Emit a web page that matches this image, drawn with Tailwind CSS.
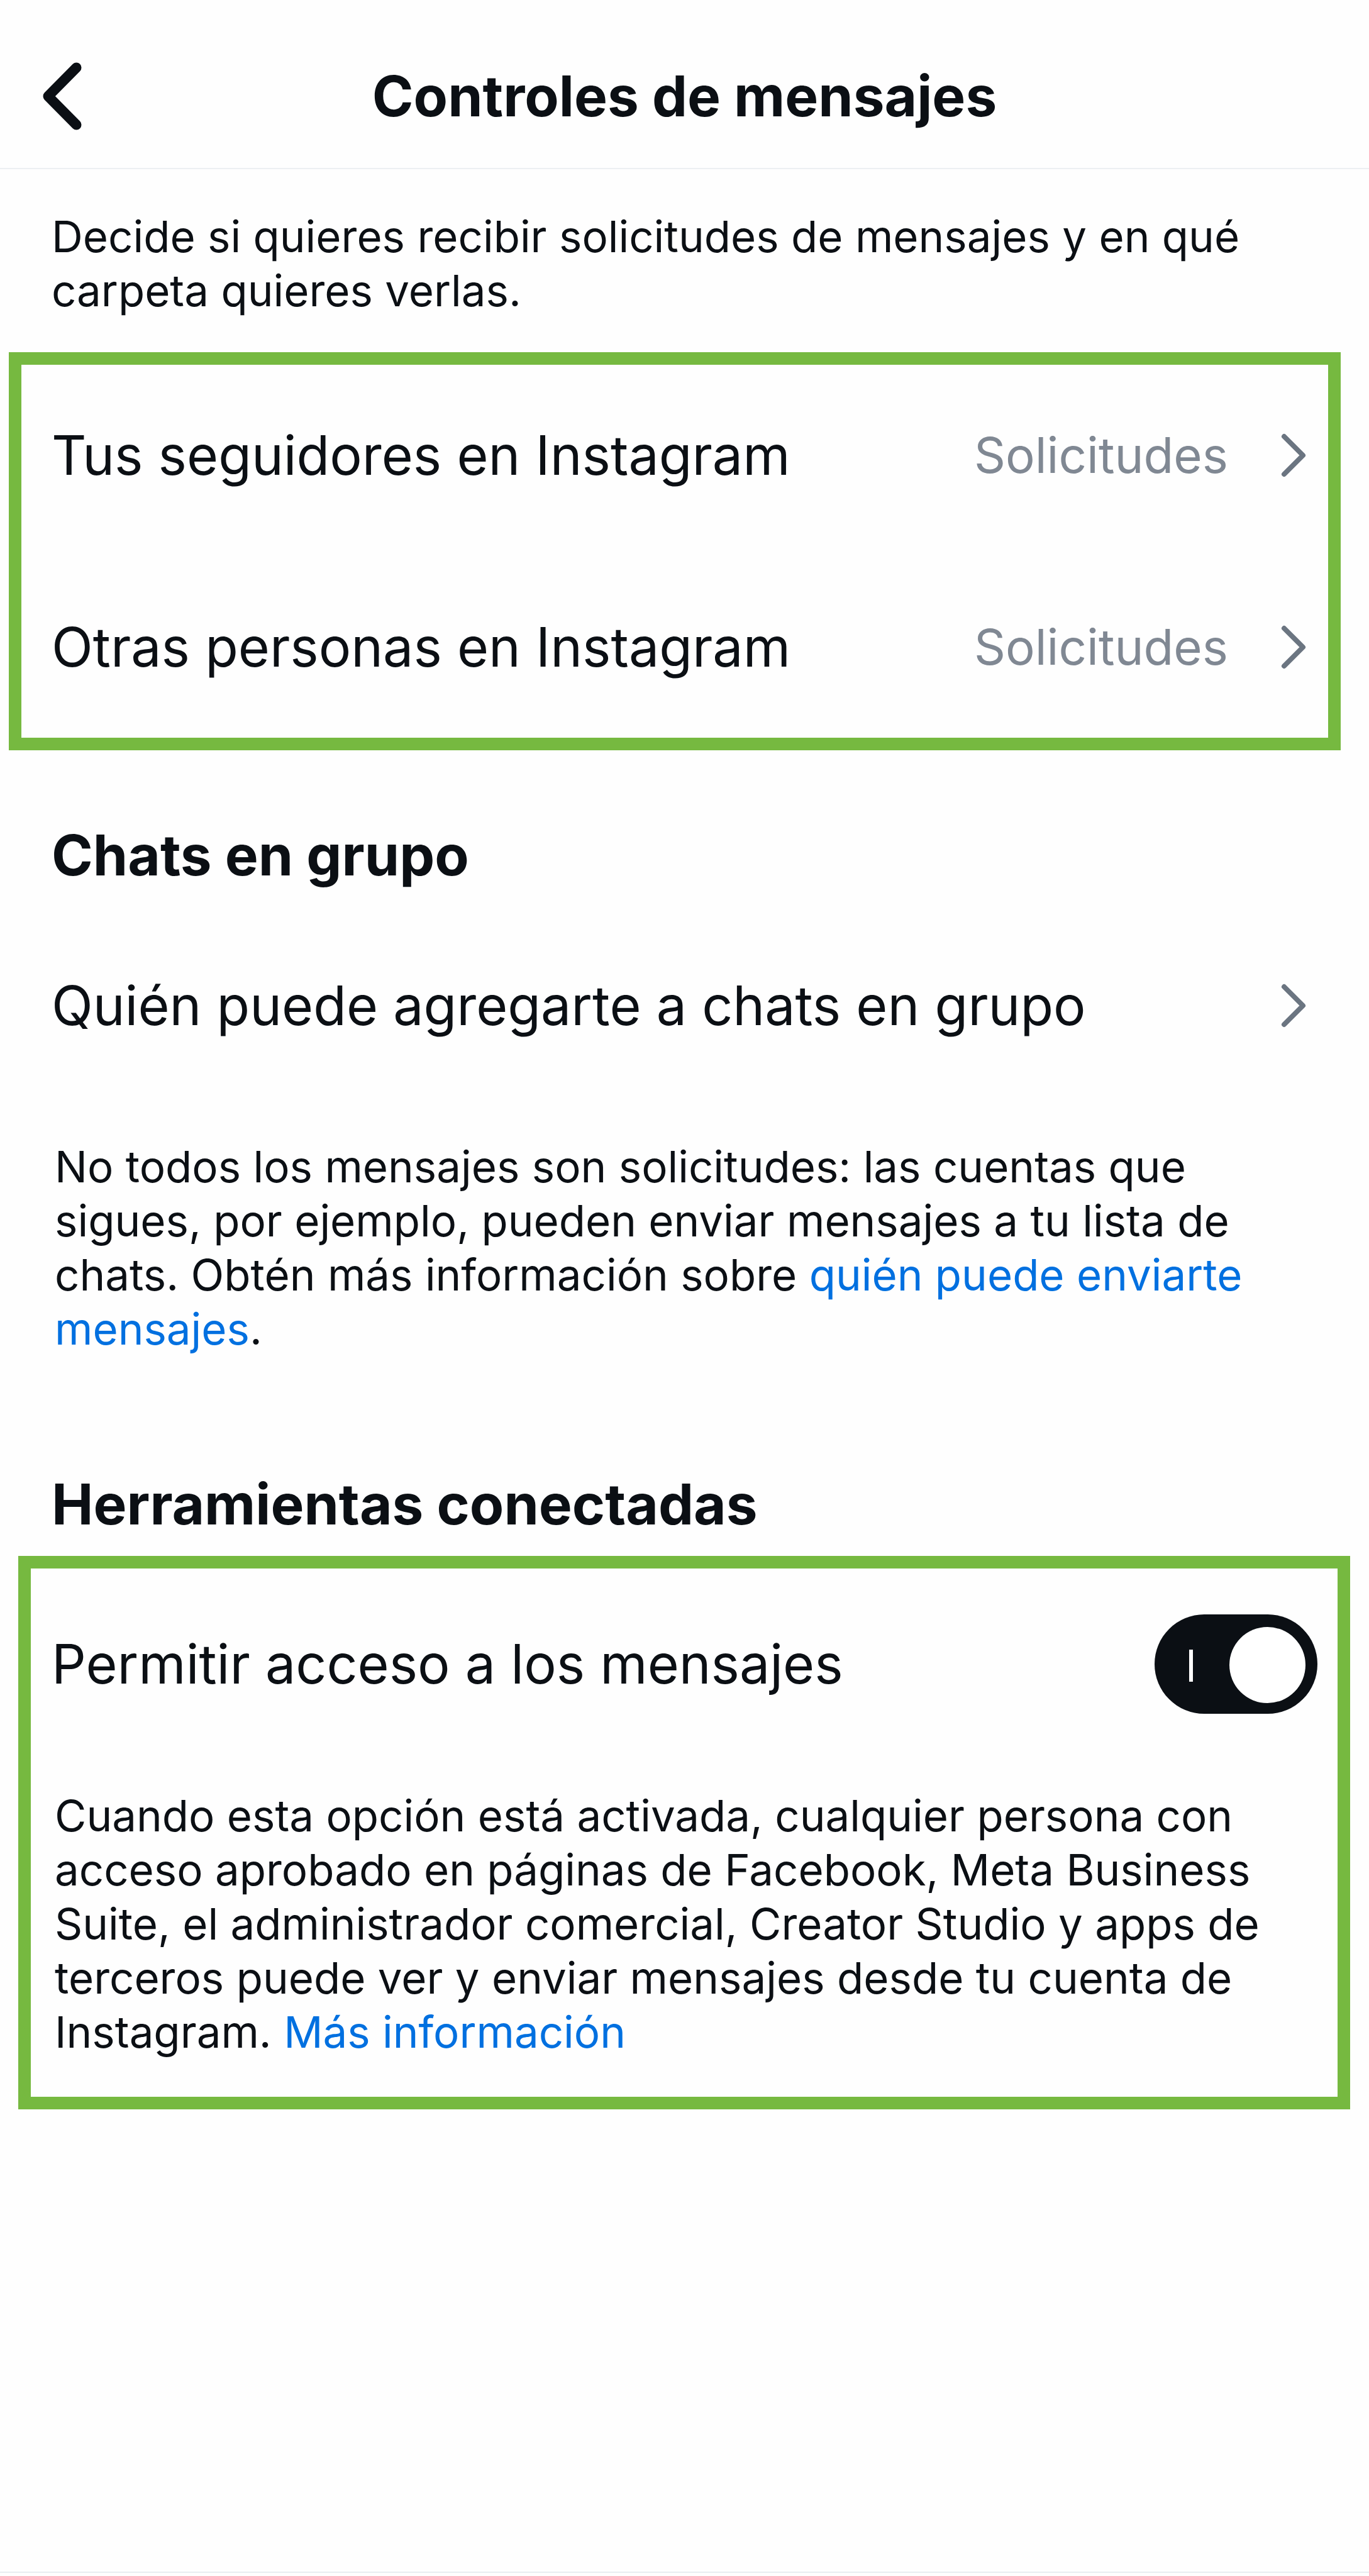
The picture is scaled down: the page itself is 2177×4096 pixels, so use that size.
<!DOCTYPE html>
<html lang="es">
<head>
<meta charset="utf-8">
<meta name="viewport" content="width=device-width, initial-scale=1">
<title>Controles de mensajes</title>
<script src="https://cdn.jsdelivr.net/npm/@tailwindcss/browser@4"></script>
</head>
<body class="flex min-h-screen flex-col bg-[#fefefe] font-['Inter',sans-serif] text-[#0b0f14]">

  <header class="grid h-[269px] grid-cols-[1fr_auto_1fr] items-center border-b-2 border-[#eceff2] pt-[38px]">
    <button type="button" aria-label="Atrás" class="ml-[67px] justify-self-start">
      <svg class="h-[108px] w-[63px]" viewBox="0 0 63 108" fill="none" stroke="currentColor" stroke-width="16" stroke-linecap="round" stroke-linejoin="round" aria-hidden="true"><path d="M54.500 8.500 9.500 54l45 45.500"/></svg>
    </button>
    <h1 class="text-[89px] leading-[110px] font-bold">Controles de mensajes</h1>
  </header>

  <main>
    <p class="pt-16 pr-[85px] pl-[82px] text-[69px] leading-[86px]">Decide si quieres recibir solicitudes de mensajes y en qué carpeta quieres verlas.</p>

    <!-- Solicitudes -->
    <section class="mt-[55px] mr-[45px] ml-[14px] flex flex-col gap-[105px] border-20 border-[#76b940] py-[44px] pr-[35px] pl-12">
      <button type="button" class="flex h-[200px] items-center gap-[84px] text-left">
        <span class="flex-1 text-[86px] leading-[110px]">Tus seguidores en Instagram</span>
        <span class="text-[78px] leading-[110px] text-[#808893]">Solicitudes</span>
        <svg class="h-[70px] w-10 shrink-0 text-[#6b7581]" viewBox="0 0 40 70" fill="none" stroke="currentColor" stroke-width="8" stroke-linecap="round" stroke-linejoin="round" aria-hidden="true"><path d="m5 5 30 30L5 65"/></svg>
      </button>
      <button type="button" class="flex h-[200px] items-center gap-[84px] text-left">
        <span class="flex-1 text-[86px] leading-[110px]">Otras personas en Instagram</span>
        <span class="text-[78px] leading-[110px] text-[#808893]">Solicitudes</span>
        <svg class="h-[70px] w-10 shrink-0 text-[#6b7581]" viewBox="0 0 40 70" fill="none" stroke="currentColor" stroke-width="8" stroke-linecap="round" stroke-linejoin="round" aria-hidden="true"><path d="m5 5 30 30L5 65"/></svg>
      </button>
    </section>

    <!-- Chats en grupo -->
    <section class="mt-[112px]">
      <h2 class="pl-[82px] text-[89px] leading-[110px] font-bold">Chats en grupo</h2>
      <button type="button" class="mt-[84px] flex h-[200px] w-full items-center gap-[84px] pr-[100px] pl-[82px] text-left">
        <span class="flex-1 text-[86px] leading-[110px]">Quién puede agregarte a chats en grupo</span>
        <svg class="h-[70px] w-10 shrink-0 text-[#6b7581]" viewBox="0 0 40 70" fill="none" stroke="currentColor" stroke-width="8" stroke-linecap="round" stroke-linejoin="round" aria-hidden="true"><path d="m5 5 30 30L5 65"/></svg>
      </button>
      <p class="mt-[113px] px-[87px] text-[69px] leading-[86px]">No todos los mensajes son solicitudes: las cuentas que sigues, por ejemplo, pueden enviar mensajes a tu lista de chats. Obtén más información sobre <a href="#" class="text-[#0070e0]">quién puede enviarte mensajes</a>.</p>
    </section>

    <!-- Herramientas conectadas -->
    <section class="mt-[181px]">
      <h2 class="pl-[82px] text-[89px] leading-[110px] font-bold">Herramientas conectadas</h2>
      <div class="mt-[27px] mr-[30px] ml-[29px] border-20 border-[#76b940] pt-[52px] pb-[60px]">
        <div class="flex h-[200px] items-center justify-between pr-8 pl-[33px]">
          <label for="acceso" class="text-[86px] leading-[110px]">Permitir acceso a los mensajes</label>
          <input id="acceso" type="checkbox" role="switch" checked class="relative h-[158px] w-[259px] shrink-0 appearance-none rounded-full bg-[#0b0f14] before:absolute before:top-[56px] before:left-[55px] before:h-[51px] before:w-[6px] before:bg-white after:absolute after:top-5 after:left-[119px] after:size-[121px] after:rounded-full after:bg-white">
        </div>
        <p class="mt-[98px] pr-[60px] pl-[38px] text-[69px] leading-[86px]">Cuando esta opción está activada, cualquier persona con acceso aprobado en páginas de Facebook, Meta Business Suite, el administrador comercial, Creator Studio y apps de terceros puede ver y enviar mensajes desde tu cuenta de Instagram. <a href="#" class="text-[#0070e0]">Más información</a></p>
      </div>
    </section>
  </main>

  <footer class="mt-auto h-[7px] border-t-2 border-[#e8edf1]"></footer>
</body>
</html>
